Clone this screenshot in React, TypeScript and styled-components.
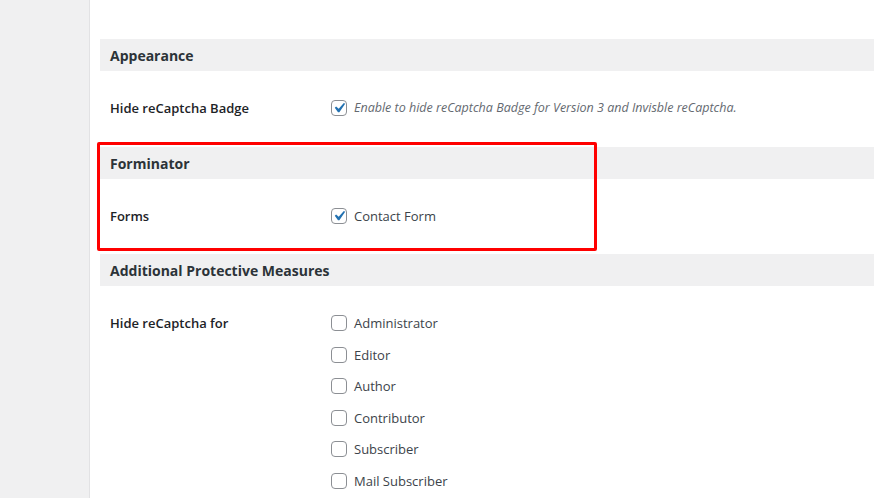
import React from 'react';
import styled, {createGlobalStyle} from 'styled-components';

const Global = createGlobalStyle`
  html, body {
    margin: 0;
    padding: 0;
    background: #f0f0f1;
    font-family: "Open Sans", "Noto Sans", Arial, sans-serif;
    color: #1d2327;
  }
`;

const Layout = styled.div`
  display: flex;
  min-height: 498px;
  overflow: hidden;
`;

const Sidebar = styled.div`
  width: 89px;
  flex-shrink: 0;
  background: #f0f0f1;
  border-right: 1px solid #e2e2e4;
`;

const Main = styled.div`
  flex: 1;
  background: #fff;
  padding: 39px 0 0 10px;
`;

const Section = styled.section`
  position: relative;
`;

const SectionTitle = styled.h2`
  margin: 0;
  height: 32px;
  display: flex;
  align-items: center;
  padding-left: 10px;
  background: #f0f0f1;
  font-size: 14px;
  font-weight: 700;
  color: #2c3338;
`;

const Row = styled.div<{$bottom?: number}>`
  display: grid;
  grid-template-columns: 221px 1fr;
  padding: 28px 0 ${p => p.$bottom ?? 30}px 10px;
`;

const Label = styled.div`
  font-size: 13px;
  font-weight: 600;
  line-height: 18px;
  color: #1d2327;
`;

const Options = styled.div`
  display: flex;
  flex-direction: column;
  gap: 13.6px;
`;

const Option = styled.label`
  display: flex;
  align-items: center;
  gap: 7px;
  font-size: 13px;
  line-height: 18px;
  color: #3c434a;
`;

const Box = styled.span`
  width: 16px;
  height: 16px;
  box-sizing: border-box;
  border: 1px solid #8c8f94;
  border-radius: 4px;
  background: #fff;
  display: flex;
  align-items: center;
  justify-content: center;
  flex-shrink: 0;

  & svg {
    margin: -3px;
    flex-shrink: 0;
  }
`;

const Description = styled.span`
  font-style: italic;
  color: #646970;
  font-size: 12.5px;
`;

const Highlight = styled.div`
  position: absolute;
  left: -3px;
  top: -5px;
  width: 500px;
  height: 109px;
  box-sizing: border-box;
  border: 3px solid #f00;
  border-radius: 2px;
  pointer-events: none;
`;

const Check = ({checked}: {checked?: boolean}) => (
  <Box>
    {checked && (
      <svg width="20" height="20" viewBox="0 0 20 20">
        <path d="M14.83 4.89l1.34.94-5.81 8.38H9.02L5.78 9.67l1.34-1.25 2.57 2.4z" fill="#2271b1"/>
      </svg>
    )}
  </Box>
);

const roles = ['Administrator', 'Editor', 'Author', 'Contributor', 'Subscriber', 'Mail Subscriber'];

export default function App() {
  return (
    <>
      <Global/>
      <Layout>
        <Sidebar/>
        <Main>
          <Section>
            <SectionTitle>Appearance</SectionTitle>
            <Row>
              <Label>Hide reCaptcha Badge</Label>
              <Option>
                <Check checked/>
                <Description>Enable to hide reCaptcha Badge for Version 3 and Invisble reCaptcha.</Description>
              </Option>
            </Row>
          </Section>
          <Section>
            <SectionTitle>Forminator</SectionTitle>
            <Row $bottom={29}>
              <Label>Forms</Label>
              <Option>
                <Check checked/>
                Contact Form
              </Option>
            </Row>
            <Highlight/>
          </Section>
          <Section>
            <SectionTitle>Additional Protective Measures</SectionTitle>
            <Row>
              <Label>Hide reCaptcha for</Label>
              <Options>
                {roles.map(r => (
                  <Option key={r}>
                    <Check/>
                    {r}
                  </Option>
                ))}
              </Options>
            </Row>
          </Section>
        </Main>
      </Layout>
    </>
  );
}
